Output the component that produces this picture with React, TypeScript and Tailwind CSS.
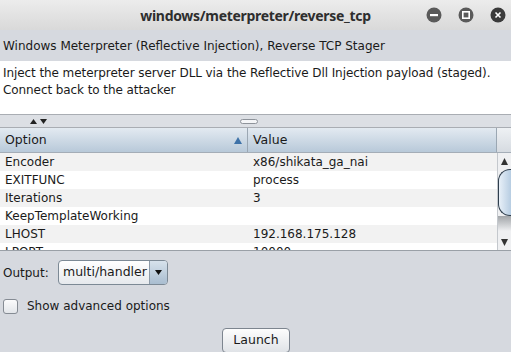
import React from 'react';

const rows: [string, string][] = [
  ['Encoder', 'x86/shikata_ga_nai'],
  ['EXITFUNC', 'process'],
  ['Iterations', '3'],
  ['KeepTemplateWorking', ''],
  ['LHOST', '192.168.175.128'],
  ['LPORT', '10000'],
];

function WinButton({ kind }: { kind: 'min' | 'max' | 'close' }) {
  return (
    <svg width="16" height="16" viewBox="0 0 16 16">
      <circle cx="8" cy="8" r="7.5" fill={kind === 'close' ? '#3b3b3b' : '#5a5a5a'} />
      {kind === 'min' && <rect x="4" y="7" width="8" height="2.2" fill="#fff" />}
      {kind === 'max' && (
        <rect x="4.8" y="4.8" width="6.4" height="6.4" fill="none" stroke="#fff" strokeWidth="1.6" />
      )}
      {kind === 'close' && (
        <path d="M5.5 5.5 L10.5 10.5 M10.5 5.5 L5.5 10.5" stroke="#fff" strokeWidth="1.6" />
      )}
    </svg>
  );
}

export default function App() {
  return (
    <div className="flex h-[352px] w-[511px] flex-col overflow-hidden bg-[#d6d9df] font-['DejaVu_Sans',sans-serif] text-[12px] text-[#1a1a1a]">
      {/* title bar */}
      <div className="grid h-[30px] shrink-0 grid-cols-[1fr_auto_1fr] items-center bg-gradient-to-b from-[#ececec] to-[#d9d9d9]">
        <div />
        <div className="font-['Noto_Sans',sans-serif] text-[14px] font-bold tracking-[-0.3px] text-[#2e2e2e]">
          windows/meterpreter/reverse_tcp
        </div>
        <div className="flex items-center justify-end gap-[16px] pr-[5px]">
          <WinButton kind="min" />
          <WinButton kind="max" />
          <WinButton kind="close" />
        </div>
      </div>

      <div className="flex h-[31px] shrink-0 items-center px-[3px]">
        Windows Meterpreter (Reflective Injection), Reverse TCP Stager
      </div>

      <div className="h-[53px] shrink-0 bg-white px-[3px] pt-[4px] leading-[17px] tracking-[-0.08px]">
        Inject the meterpreter server DLL via the Reflective Dll Injection payload (staged).
        <br />
        Connect back to the attacker
      </div>

      {/* split bar */}
      <div className="flex h-[14px] shrink-0 items-center border-y border-[#a9adb3] bg-[#dcdfe4]">
        <div className="ml-[30px] flex gap-[3px]">
          <svg width="7" height="5" viewBox="0 0 7 5"><path d="M0 5 L3.5 0 L7 5 Z" fill="#222" /></svg>
          <svg width="7" height="5" viewBox="0 0 7 5"><path d="M0 0 L7 0 L3.5 5 Z" fill="#222" /></svg>
        </div>
        <div className="ml-[193px] h-[5px] w-[18px] rounded-full border border-[#8e939a] bg-[#f4f5f7]" />
      </div>

      {/* table */}
      <div className="flex h-[123px] shrink-0 flex-col border-b border-[#9aa0a7] bg-white">
        <div className="flex h-[25px] shrink-0 border-b border-[#a4adb7] bg-gradient-to-b from-[#e3eaf1] to-[#b8c9d9]">
          <div className="flex w-[248px] items-center justify-between border-r border-[#9ba7b3] pl-[5px] pr-[5px] text-[12.5px]">
            <span>Option</span>
            <svg width="8" height="7" viewBox="0 0 8 7"><path d="M0 7 L4 0 L8 7 Z" fill="#3e72a8" /></svg>
          </div>
          <div className="flex w-[249px] items-center border-r border-[#9ba7b3] pl-[5px] text-[12.5px]">Value</div>
          <div className="flex-1 bg-gradient-to-b from-[#eef1f4] to-[#d6dbe1]" />
        </div>
        <div className="flex min-h-0 flex-1">
          <div className="w-[497px] overflow-hidden">
            {rows.map(([k, v], i) => (
              <div
                key={k}
                className={`flex h-[18px] items-center ${i % 2 === 0 ? 'bg-[#f2f2f2]' : 'bg-white'}`}
              >
                <span className="w-[248px] pl-[5px]">{k}</span>
                <span className="pl-[5px]">{v}</span>
              </div>
            ))}
          </div>
          {/* scrollbar */}
          <div className="flex w-[14px] flex-col border-l border-[#c4c8cd] bg-[#eff0f2]">
            <div className="flex h-[16px] items-center justify-center">
              <svg width="7" height="7" viewBox="0 0 7 7"><path d="M0 7 L3.5 0 L7 7 Z" fill="#333" /></svg>
            </div>
            <div className="h-[47px] rounded-l-[12px] border border-r-0 border-[#2f3e4d] bg-gradient-to-r from-[#e8f0f8] to-[#b7cde2]" />
            <div className="h-[15px] bg-gradient-to-b from-[#6f7479] to-[#eff0f2] opacity-60" />
            <div className="flex-1" />
            <div className="flex h-[16px] items-center justify-center">
              <svg width="7" height="7" viewBox="0 0 7 7"><path d="M0 0 L7 0 L3.5 7 Z" fill="#333" /></svg>
            </div>
          </div>
        </div>
      </div>

      {/* bottom controls */}
      <div className="flex flex-col px-[3px]">
        <div className="mt-[9px] flex items-center">
          <span className="w-[55px]">Output:</span>
          <div className="flex h-[25px] w-[110px] overflow-hidden rounded-[4px] border border-[#7c8995] bg-gradient-to-b from-white to-[#e6e9ed]">
            <span className="flex flex-1 items-center pl-[4px] text-[12.5px]">multi/handler</span>
            <div className="flex w-[18px] items-center justify-center border-l border-[#8c9aa8] bg-gradient-to-b from-[#d7e2ec] to-[#a9bdd0]">
              <svg width="7" height="5" viewBox="0 0 7 5"><path d="M0 0 L7 0 L3.5 5 Z" fill="#111" /></svg>
            </div>
          </div>
        </div>
        <div className="mt-[12px] flex items-center">
          <div className="h-[15px] w-[15px] rounded-[3px] border border-[#858b93] bg-gradient-to-b from-[#fbfbfc] to-[#e3e6ea]" />
          <span className="ml-[9px]">Show advanced options</span>
        </div>
        <div className="mt-[13px] flex justify-center">
          <button className="ml-[1px] h-[25px] w-[68px] rounded-[4px] border border-[#7d858f] bg-gradient-to-b from-[#fdfdfd] to-[#e0e3e7] text-[12.5px] text-[#1a1a1a]">
            Launch
          </button>
        </div>
      </div>
    </div>
  );
}
